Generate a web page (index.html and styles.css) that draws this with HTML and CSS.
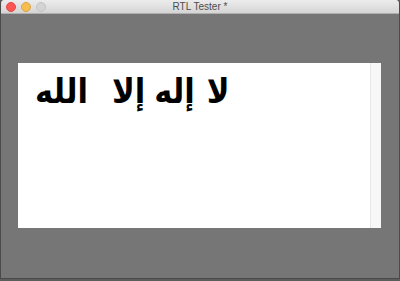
FILE: index.html
```html
<!DOCTYPE html>
<html lang="en">
<head>
<meta charset="utf-8">
<title>RTL Tester *</title>
<link rel="stylesheet" href="styles.css">
</head>
<body>
<div class="window">
  <div class="titlebar">
    <div class="lights">
      <span class="light red"></span>
      <span class="light yellow"></span>
      <span class="light gray"></span>
    </div>
    <div class="title">RTL Tester *</div>
  </div>
  <div class="content">
    <div class="panel">
      <div class="text-area">
        <p class="arabic" dir="rtl" lang="ar"><span class="w w1">لا</span><span class="w w2">إله</span><span class="w w3">إلا</span><span class="w w4">الله</span></p>
      </div>
      <div class="scrollbar"></div>
    </div>
  </div>
</div>
</body>
</html>
```

FILE: styles.css
```css
html, body {
  margin: 0;
  padding: 0;
  width: 400px;
  height: 281px;
  background: #5c5c5c;
  overflow: hidden;
}
.window {
  width: 398px;
  height: 278px;
  border: 1px solid #4a4a4a;
  border-top: none;
  border-radius: 4px 4px 0 0;
  display: flex;
  flex-direction: column;
  overflow: hidden;
  background: #767676;
}
.titlebar {
  height: 13px;
  flex: none;
  background: linear-gradient(#ececec, #d5d5d5);
  border-bottom: 1px solid #b0b0b0;
  display: flex;
  align-items: center;
  position: relative;
}
.lights {
  display: flex;
  gap: 5px;
  padding-left: 5px;
}
.light {
  width: 8px;
  height: 8px;
  border-radius: 50%;
  display: block;
}
.red { background: #fc5753; border: 0.5px solid #de4a45; }
.yellow { background: #f6be4f; border: 0.5px solid #d9a441; }
.gray { background: #d3d3d3; border: 0.5px solid #c3c3c3; }
.title {
  position: absolute;
  left: 0;
  right: 0;
  top: 0;
  text-align: center;
  font-family: "Liberation Sans", Arial, sans-serif;
  font-size: 10px;
  line-height: 13px;
  color: #4d4d4d;
}
.content {
  flex: 1;
  padding: 49px 0 0 17px;
  background: #767676;
}
.panel {
  width: 363px;
  height: 165px;
  background: #ffffff;
  display: flex;
}
.text-area {
  flex: 1;
  padding: 3px 0 0 17px;
}
.scrollbar {
  width: 10px;
  background: #f7f7f7;
  border-left: 1px solid #e8e8e8;
}
.arabic {
  margin: 0;
  display: inline-flex;
  flex-direction: row;
  align-items: baseline;
  font-family: "DejaVu Sans Condensed", "DejaVu Sans", sans-serif;
  font-stretch: condensed;
  font-weight: bold;
  font-size: 34px;
  line-height: 50px;
  color: #000;
}
.w1 { margin-left: 12px; }
.w2 { margin-left: 9px; }
.w3 { margin-left: 24px; }
```
